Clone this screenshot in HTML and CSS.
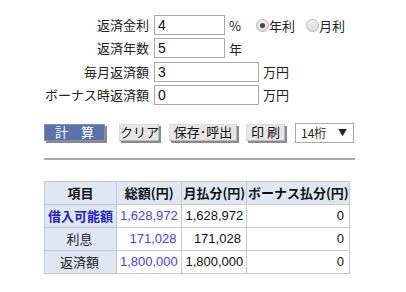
FILE: index.html
```html
<!DOCTYPE html>
<html lang="ja">
<head>
    <meta charset="UTF-8">
    <meta name="viewport" content="width=device-width, initial-scale=1.0">
    <title>ローン計算</title>
    <link rel="stylesheet" href="styles.css">
</head>
<body>
    <div class="container">
        <div class="form">
            <label class="label">返済金利</label>
            <div class="field">
                <input class="input short" type="text" value="4">
                <span class="unit">%</span>
                <span class="radios">
                    <span class="radio on"></span><span class="rtext">年利</span>
                    <span class="radio"></span><span class="rtext">月利</span>
                </span>
            </div>
            <label class="label">返済年数</label>
            <div class="field">
                <input class="input short" type="text" value="5">
                <span class="unit">年</span>
            </div>
            <label class="label">毎月返済額</label>
            <div class="field">
                <input class="input long" type="text" value="3">
                <span class="unit">万円</span>
            </div>
            <label class="label">ボーナス時返済額</label>
            <div class="field">
                <input class="input long" type="text" value="0">
                <span class="unit">万円</span>
            </div>
        </div>

        <div class="buttons">
            <button class="btn calc">計　算</button>
            <button class="btn clear">クリア</button>
            <button class="btn save">保存･呼出</button>
            <button class="btn print">印 刷</button>
            <div class="select"><span>14桁</span><span class="arrow">▼</span></div>
        </div>

        <div class="rule"></div>

        <table class="result">
            <tr>
                <th class="c1">項目</th>
                <th class="c2">総額(円)</th>
                <th class="c3">月払分(円)</th>
                <th class="c4">ボーナス払分(円)</th>
            </tr>
            <tr>
                <td class="item strong">借入可能額</td>
                <td class="num blue">1,628,972</td>
                <td class="num">1,628,972</td>
                <td class="num">0</td>
            </tr>
            <tr>
                <td class="item">利息</td>
                <td class="num blue">171,028</td>
                <td class="num">171,028</td>
                <td class="num">0</td>
            </tr>
            <tr>
                <td class="item">返済額</td>
                <td class="num blue">1,800,000</td>
                <td class="num">1,800,000</td>
                <td class="num">0</td>
            </tr>
        </table>
    </div>
</body>
</html>
```

FILE: styles.css
```css
body {
    margin: 0;
    background: #fff;
    color: #222;
    font-family: "Liberation Sans", "Noto Sans CJK JP", sans-serif;
    font-size: 13px;
}
.container {
    padding: 15px 0 0 44px;
    white-space: nowrap;
}
.form {
    display: grid;
    grid-template-columns: 105px max-content;
    column-gap: 5px;
    row-gap: 3.3px;
    grid-auto-rows: 20px;
}
.label {
    text-align: right;
    line-height: 20px;
    font-family: "Noto Sans CJK JP", sans-serif;
}
.field {
    display: flex;
    align-items: center;
}
.input {
    box-sizing: border-box;
    height: 20px;
    border: 1px solid #a9a9a9;
    padding: 0 3px;
    font-family: "Liberation Sans", sans-serif;
    font-size: 14px;
    color: #111;
    margin: 0;
}
.input.short {
    width: 71px;
}
.input.long {
    width: 105px;
}
.unit {
    margin-left: 4px;
    font-family: "Noto Sans CJK JP", sans-serif;
}
.radios {
    display: flex;
    align-items: center;
    margin-left: 15px;
}
.radio {
    box-sizing: border-box;
    width: 13px;
    height: 13px;
    border-radius: 50%;
    border: 1px solid #b4b4b4;
    background: linear-gradient(#f0f0f0, #dcdcdc);
    position: relative;
}
.radio.on::after {
    content: "";
    position: absolute;
    left: 3px;
    top: 3px;
    width: 5px;
    height: 5px;
    border-radius: 50%;
    background: #444;
}
.rtext {
    font-family: "Noto Sans CJK JP", sans-serif;
    margin-right: 11px;
}
.buttons {
    display: flex;
    align-items: flex-start;
    margin-top: 18px;
    height: 21px;
}
.btn {
    box-sizing: border-box;
    height: 17px;
    padding: 0;
    border: 1px solid #ddd;
    border-right-color: #bbb;
    border-bottom-color: #bbb;
    box-shadow: 2px 2px 0 #8a8a8a;
    background: #e6e6e6;
    font-family: "Noto Sans CJK JP", sans-serif;
    font-size: 13px;
    line-height: 14px;
    color: #111;
    margin-top: 1px;
    white-space: nowrap;
}
.btn.calc {
    width: 61px;
    background: #5a73a8;
    border-color: #7c90ba;
    color: #fff;
    margin-right: 14px;
}
.btn.clear {
    width: 40px;
    margin-right: 10px;
}
.btn.save {
    width: 68px;
    margin-right: 9px;
}
.btn.print {
    width: 39px;
    margin-right: 10px;
}
.select {
    box-sizing: border-box;
    width: 59px;
    height: 20px;
    border: 1px solid #a9a9a9;
    display: flex;
    align-items: center;
    justify-content: space-between;
    padding: 0 6px 0 5px;
    font-family: "Noto Sans CJK JP", sans-serif;
    font-size: 12px;
}
.arrow {
    font-size: 9px;
}
.rule {
    margin-top: 14px;
    height: 2px;
    background: #a8a8a8;
    width: 311px;
}
.result {
    margin-top: 21px;
    border-collapse: collapse;
    table-layout: fixed;
    width: 306px;
}
.result th,
.result td {
    border: 1px solid #c8c8c8;
    height: 22px;
    padding: 0 5px 0 3px;
    white-space: nowrap;
    overflow: hidden;
}
.result .c1 { width: 64px; }
.result .c2 { width: 58px; }
.result .c3 { width: 57px; }
.result .c4 { width: 93px; }
.result th {
    background: #dfe7f4;
    font-family: "Noto Sans CJK JP", sans-serif;
    font-size: 13px;
    color: #111;
    padding: 0 1px;
}
.result .item {
    background: #dfe7f4;
    text-align: center;
    font-family: "Noto Sans CJK JP", sans-serif;
}
.result .item.strong {
    color: #2222cc;
    font-weight: bold;
}
.result .num {
    text-align: right;
    font-size: 13px;
    color: #111;
}
.result .num.blue {
    color: #4a3cf0;
}
```
